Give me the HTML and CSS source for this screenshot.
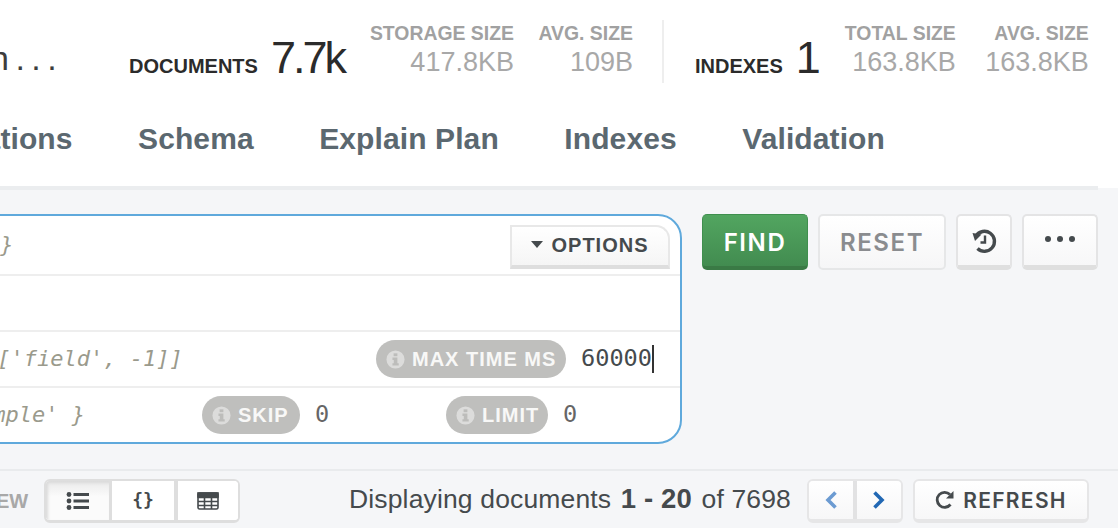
FILE: index.html
```html
<!DOCTYPE html>
<html lang="en">

<head>
    <meta charset="UTF-8">
    <title>Documents</title>
    <link rel="stylesheet" href="styles.css">
</head>

<body>
    <div class="header">
        <div class="stats">
            <div class="ns-name">n...</div>
            <div class="stat-main docs"><span class="stat-label">DOCUMENTS</span><span class="stat-big">7.7k</span></div>
            <div class="stat-small storage"><div class="small-label">STORAGE SIZE</div><div class="small-value">417.8KB</div></div>
            <div class="stat-small avg1"><div class="small-label">AVG. SIZE</div><div class="small-value">109B</div></div>
            <div class="stat-divider"></div>
            <div class="stat-main indexes"><span class="stat-label">INDEXES</span><span class="stat-big">1</span></div>
            <div class="stat-small total"><div class="small-label">TOTAL SIZE</div><div class="small-value">163.8KB</div></div>
            <div class="stat-small avg2"><div class="small-label">AVG. SIZE</div><div class="small-value">163.8KB</div></div>
        </div>
        <div class="tabs">
            <span class="tab">Aggregations</span>
            <span class="tab">Schema</span>
            <span class="tab">Explain Plan</span>
            <span class="tab">Indexes</span>
            <span class="tab">Validation</span>
        </div>
    </div>

    <div class="content">
        <div class="query-box">
            <div class="query-row row-filter">
                <span class="placeholder">{ field: 'value' }</span>
                <button class="options-btn" type="button"><span class="caret"></span>OPTIONS</button>
            </div>
            <div class="query-row row-project"></div>
            <div class="query-row row-sort">
                <span class="placeholder">[['field', -1]]</span>
                <span class="pill pill-maxtime"><svg class="info" viewBox="0 0 20 20"><use href="#i-info"/></svg>MAX TIME MS</span>
                <span class="mono-value">60000</span><span class="cursor"></span>
            </div>
            <div class="query-row row-collation">
                <span class="placeholder">{ locale: 'simple' }</span>
                <span class="pill pill-skip"><svg class="info" viewBox="0 0 20 20"><use href="#i-info"/></svg>SKIP</span>
                <span class="mono-value zero zero-skip">0</span>
                <span class="pill pill-limit"><svg class="info" viewBox="0 0 20 20"><use href="#i-info"/></svg>LIMIT</span>
                <span class="mono-value zero">0</span>
            </div>
        </div>
        <div class="actions">
            <button class="btn btn-find" type="button">FIND</button>
            <button class="btn btn-reset" type="button">RESET</button>
            <button class="btn btn-history" type="button">
                <svg width="26" height="26" viewBox="0 0 26 26" fill="none" stroke="#454a4d" stroke-width="3.4">
                    <path d="M5 8A10 10 0 1 1 6.5 20.5"/>
                    <path d="M1.5 5l9 1.5-6.5 6.5z" fill="#454a4d" stroke="none"/>
                    <path d="M14 7.5v7h-4.5" stroke-width="2.4"/>
                </svg>
            </button>
            <button class="btn btn-more" type="button"><span class="dot"></span><span class="dot"></span><span class="dot"></span></button>
        </div>
    </div>

    <div class="footer">
        <span class="view-label">VIEW</span>
        <div class="view-group">
            <button class="view-btn active" type="button">
                <svg width="24" height="20" viewBox="0 0 24 20" fill="#454a4d">
                    <circle cx="3" cy="3.5" r="2.4"/><circle cx="3" cy="10" r="2.4"/><circle cx="3" cy="16.5" r="2.4"/>
                    <rect x="7.5" y="2" width="15.5" height="3"/><rect x="7.5" y="8.5" width="15.5" height="3"/><rect x="7.5" y="15" width="15.5" height="3"/>
                </svg>
            </button>
            <button class="view-btn view-json" type="button">{}</button>
            <button class="view-btn" type="button">
                <svg width="22" height="18" viewBox="0 0 22 18" fill="none" stroke="#454a4d" stroke-width="1.6">
                    <rect x="1" y="1" width="20" height="16" rx="1.5"/>
                    <path d="M1 5.5h20M1 9.5h20M1 13.5h20M7.5 5v12M14.5 5v12"/>
                    <rect x="1" y="1" width="20" height="4" fill="#454a4d"/>
                </svg>
            </button>
        </div>
        <div class="paging-text">Displaying documents <b>1 - 20</b> of 7698</div>
        <div class="pager">
            <button class="page-btn prev" type="button">
                <svg width="14" height="20" viewBox="0 0 14 20" fill="none" stroke="#6c9bd2" stroke-width="3.6"><path d="M11.5 2.5L4 10l7.5 7.5"/></svg>
            </button>
            <button class="page-btn next" type="button">
                <svg width="14" height="20" viewBox="0 0 14 20" fill="none" stroke="#2268b4" stroke-width="3.6"><path d="M2.5 2.5L10 10l-7.5 7.5"/></svg>
            </button>
        </div>
        <button class="btn-refresh" type="button">
            <svg width="20" height="20" viewBox="0 0 20 20" fill="none" stroke="#454a4d" stroke-width="2.8">
                <path d="M15.5 14.5A7.5 7.5 0 1 1 15 4.5"/>
                <path d="M18.5 1v7.5H11z" fill="#454a4d" stroke="none"/>
            </svg>
            REFRESH
        </button>
    </div>

    <svg class="defs" width="0" height="0">
        <symbol id="i-info" viewBox="0 0 20 20">
            <circle cx="10" cy="10" r="9.5" fill="#dcdcdb"/>
            <rect x="8" y="3.5" width="4" height="3" fill="#bdbdbb"/>
            <path d="M6.8 8h5.2v6h1.4v2.4H6.8V14h1.4v-3.6H6.8z" fill="#bdbdbb"/>
        </symbol>
    </svg>
</body>

</html>
```

FILE: styles.css
```css
html,
body {
    margin: 0;
    padding: 0;
    height: 100%;
    overflow: hidden;
}

body {
    width: 1118px;
    height: 528px;
    background-color: #f5f6f8;
    font-family: "Liberation Sans", Arial, sans-serif;
    color: #333;
    display: flex;
    flex-direction: column;
}

button {
    font-family: inherit;
    padding: 0;
    box-sizing: border-box;
}

.defs {
    display: none;
}

/* header */
.header {
    height: 186px;
    background-color: #fff;
    border-bottom: 4px solid #ebedef;
    margin-right: 20px;
    box-shadow: 20px -2px 0 #fff;
    flex: none;
}

.stats {
    height: 92px;
    display: flex;
    align-items: flex-start;
}

.ns-name {
    width: 129px;
    margin-left: -10px;
    margin-right: 10px;
    padding-top: 38px;
    font-size: 34px;
    line-height: 40px;
    letter-spacing: 6.5px;
    color: #3d3d3d;
    white-space: nowrap;
    overflow: hidden;
    box-sizing: border-box;
    flex: none;
}

.stat-main {
    display: flex;
    align-items: baseline;
    padding-top: 32px;
    height: 52px;
    color: #2b2b2b;
    flex: none;
}

.stat-label {
    font-size: 20px;
    font-weight: bold;
    line-height: 52px;
}

.stat-big {
    font-size: 45px;
    line-height: 52px;
    margin-left: 13px;
    letter-spacing: -3px;
}

.stat-small {
    text-align: right;
    padding-top: 21px;
    flex: none;
}

.small-label {
    font-size: 19.4px;
    font-weight: bold;
    line-height: 24px;
    color: #a1a1a1;
    white-space: nowrap;
}

.small-value {
    font-size: 27px;
    line-height: 34px;
    color: #a8a8a8;
    white-space: nowrap;
}

.storage {
    width: 145px;
    margin-left: 25px;
}

.avg1 {
    width: 100px;
    margin-left: 19px;
}

.stat-divider {
    width: 2px;
    height: 63px;
    margin: 20px 0 0 29px;
    background-color: #eeeeee;
    flex: none;
}

.indexes {
    margin-left: 31px;
}

.total {
    width: 122px;
    margin-left: 16px;
}

.avg2 {
    width: 108px;
    margin-left: 25px;
}

.tabs {
    display: flex;
    height: 94px;
    align-items: flex-start;
    margin-left: -122px;
    padding-top: 29px;
    box-sizing: border-box;
}

.tab {
    font-size: 30px;
    font-weight: bold;
    line-height: 36px;
    letter-spacing: 0.1px;
    color: #5b6870;
    margin-right: 65.5px;
    white-space: nowrap;
}

/* query bar */
.content {
    display: flex;
    align-items: flex-start;
    padding-top: 24px;
    height: 279px;
    box-sizing: border-box;
    flex: none;
}

.query-box {
    width: 722px;
    height: 230px;
    margin-left: -40px;
    flex: none;
    box-sizing: border-box;
    background-color: #fff;
    border: 2px solid #5fa9dc;
    border-radius: 24px;
    overflow: hidden;
}

.query-row {
    display: flex;
    align-items: center;
    box-sizing: border-box;
    height: 56px;
    border-bottom: 2px solid #eeeeee;
    font-family: "DejaVu Sans Mono", monospace;
    font-size: 23.6px;
}

.row-filter {
    height: 60px;
    justify-content: space-between;
    padding-right: 10px;
}

.row-collation {
    height: 54px;
    border-bottom: none;
}

.placeholder {
    font-style: italic;
    color: #9a9a8c;
    font-size: 22px;
    padding-bottom: 2px;
    white-space: nowrap;
}

.row-filter .placeholder {
    margin-left: -187px;
}

.row-sort .placeholder {
    margin-left: 22px;
    width: 392px;
    flex: none;
}

.row-collation .placeholder {
    margin-left: -142px;
    width: 382px;
    flex: none;
}

.options-btn {
    width: 160px;
    height: 44px;
    margin-top: 3px;
    background: linear-gradient(#fff, #f5f5f5);
    border: 2px solid #e8e8e8;
    border-bottom: 4px solid #dedede;
    border-radius: 0 14px 0 0;
    font-family: "Liberation Sans", Arial, sans-serif;
    font-size: 20px;
    font-weight: bold;
    letter-spacing: 1px;
    color: #454a4d;
    display: flex;
    align-items: center;
    justify-content: center;
}

.caret {
    width: 0;
    height: 0;
    border-left: 6.5px solid transparent;
    border-right: 6.5px solid transparent;
    border-top: 7px solid #454a4d;
    margin-right: 8px;
    margin-bottom: 3px;
}

.pill {
    display: inline-flex;
    align-items: center;
    height: 38px;
    border-radius: 19px;
    background-color: #bfbfbd;
    color: #f8f8f7;
    font-family: "Liberation Sans", Arial, sans-serif;
    font-size: 20px;
    font-weight: bold;
    letter-spacing: 1px;
    padding: 0 10px;
    box-sizing: border-box;
    flex: none;
    white-space: nowrap;
}

.info {
    width: 19px;
    height: 19px;
    margin-right: 7px;
    flex: none;
}

.pill-maxtime {
    width: 190px;
}

.pill-skip {
    width: 98px;
}

.pill-limit {
    width: 102px;
}

.mono-value {
    color: #454a4d;
    margin-left: 15px;
    padding-bottom: 2px;
}

.zero {
    color: #666;
}

.zero-skip {
    width: 131px;
    flex: none;
}

.cursor {
    width: 1.5px;
    height: 28px;
    background-color: #333;
}

/* action buttons */
.actions {
    display: flex;
    gap: 10px;
    margin-left: 20px;
}

.btn {
    height: 56px;
    box-sizing: border-box;
    border-radius: 5px;
    font-size: 24px;
    font-family: "Inter", sans-serif;
    font-weight: 600;
    letter-spacing: 1.6px;
    display: flex;
    align-items: center;
    justify-content: center;
}

.btn-find {
    width: 106px;
    padding-top: 3px;
    color: #fff;
    background: linear-gradient(#52a560, #428c50);
    border: 1px solid #3f8f4e;
    border-bottom: 4px solid #3a7a45;
}

.btn-reset {
    width: 128px;
    padding-top: 1px;
    color: #8a8c8f;
    background: linear-gradient(#fff, #f6f6f7);
    border: 2px solid #e6e7e8;
}

.btn-history,
.btn-more {
    background: linear-gradient(#fff, #f7f7f8);
    border: 2px solid #e4e4e5;
    border-bottom: 5px solid #dfdfdf;
}

.btn-history {
    width: 56px;
}

.btn-more {
    width: 76px;
    gap: 6px;
    padding-bottom: 4px;
}

.dot {
    width: 6px;
    height: 6px;
    border-radius: 50%;
    background-color: #454a4d;
}

/* footer */
.footer {
    height: 59px;
    box-sizing: border-box;
    border-top: 2px solid #e9ebed;
    display: flex;
    align-items: flex-start;
    padding-top: 8px;
    flex: none;
}

.view-label {
    width: 44px;
    margin-left: -23px;
    margin-right: 23px;
    flex: none;
    font-size: 20px;
    font-weight: bold;
    line-height: 44px;
    color: #a8a8a8;
    white-space: nowrap;
    box-sizing: border-box;
}

.view-group {
    display: flex;
    width: 196px;
    height: 44px;
    box-sizing: border-box;
    background-color: #fff;
    border: 2px solid #dedede;
    border-bottom-width: 3px;
    border-radius: 6px;
    overflow: hidden;
    flex: none;
}

.view-btn {
    flex: 1;
    border: none;
    border-right: 4px solid #dedede;
    background: #fff;
    display: flex;
    align-items: center;
    justify-content: center;
    color: #454a4d;
}

.view-btn:last-child {
    border-right: none;
}

.view-btn.active {
    background: linear-gradient(#eaeaea, #fbfbfb 40%);
    flex: 0 0 66px;
    border-right-width: 3px;
    box-shadow: inset 2px 2px 3px #dadada;
}

.view-btn.view-json {
    flex: 0 0 66px;
    font-family: "DejaVu Sans Mono", monospace;
    font-size: 18px;
    font-weight: bold;
    padding-bottom: 3px;
}

.paging-text {
    margin-left: 109px;
    width: 458px;
    flex: none;
    font-size: 26.5px;
    letter-spacing: 0.15px;
    line-height: 40px;
    color: #454a4d;
    white-space: nowrap;
}

.paging-text b {
    font-size: 27.5px;
    margin: 0 2px;
}

.pager {
    display: flex;
    width: 96px;
    height: 44px;
    box-sizing: border-box;
    border: 2px solid #e6e6e7;
    border-bottom-width: 4px;
    border-radius: 6px;
    overflow: hidden;
    flex: none;
}

.page-btn {
    flex: 1;
    border: none;
    background: linear-gradient(#fff, #f7f7f8);
    display: flex;
    align-items: center;
    justify-content: center;
}

.page-btn.prev {
    border-right: 4px solid #e2e2e3;
}

.btn-refresh {
    width: 176px;
    height: 44px;
    margin-left: 10px;
    box-sizing: border-box;
    background: linear-gradient(#fff, #f7f7f8);
    border: 2px solid #e6e6e7;
    border-bottom-width: 4px;
    border-radius: 6px;
    font-family: "Inter", sans-serif;
    font-size: 21px;
    font-weight: 600;
    letter-spacing: 1.3px;
    color: #454a4d;
    display: flex;
    align-items: center;
    justify-content: center;
    gap: 8px;
    flex: none;
}
```
